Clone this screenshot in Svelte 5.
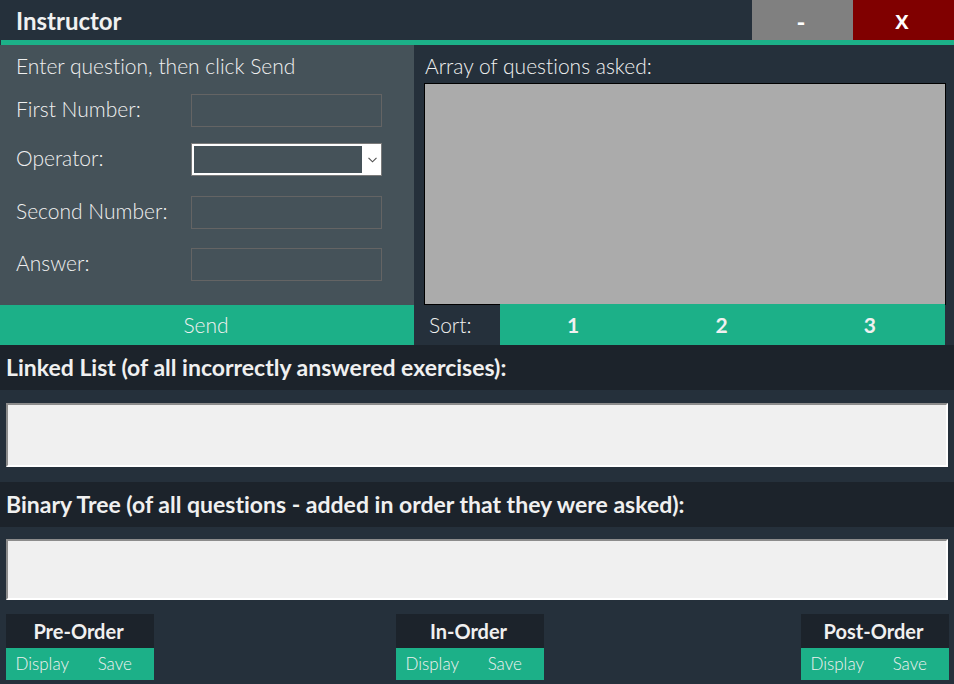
<script>
  let first = $state('');
  let operator = $state('');
  let second = $state('');
  let answer = $state('');
  const orders = ['Pre-Order', 'In-Order', 'Post-Order'];
</script>

<div class="window">
  <header class="titlebar">
    <h1>Instructor</h1>
    <button class="minimise" type="button" aria-label="Minimise">-</button>
    <button class="close" type="button" aria-label="Close">X</button>
  </header>
  <div class="accent"></div>

  <main>
    <div class="top">
      <form class="question" onsubmit={(e) => e.preventDefault()}>
        <p class="intro">Enter question, then click Send</p>
        <div class="fields">
          <label for="first">First Number:</label>
          <input id="first" type="text" bind:value={first} />
          <label for="operator">Operator:</label>
          <div class="combo">
            <select id="operator" bind:value={operator}>
              <option value=""></option>
              <option value="+">+</option>
              <option value="-">-</option>
              <option value="*">*</option>
              <option value="/">/</option>
            </select>
            <svg width="9" height="6" viewBox="0 0 9 6" aria-hidden="true">
              <path d="M0.5 0.8 L4.5 4.8 L8.5 0.8" fill="none" stroke="#505050" stroke-width="1.1" />
            </svg>
          </div>
          <label for="second">Second Number:</label>
          <input id="second" type="text" bind:value={second} />
          <label for="answer">Answer:</label>
          <input id="answer" type="text" bind:value={answer} readonly />
        </div>
        <button class="send" type="submit">Send</button>
      </form>

      <section class="asked">
        <p class="asked-label">Array of questions asked:</p>
        <div class="data" role="region" aria-label="Questions asked"></div>
        <div class="sort">
          <span>Sort:</span>
          {#each [1, 2, 3] as n}
            <button type="button">{n}</button>
          {/each}
        </div>
      </section>
    </div>

    <h2><label for="linked">Linked List (of all incorrectly answered exercises):</label></h2>
    <div class="output"><textarea id="linked" class="tall" readonly></textarea></div>

    <h2><label for="tree">Binary Tree (of all questions - added in order that they were asked):</label></h2>
    <div class="output second"><textarea id="tree" readonly></textarea></div>

    <div class="orders">
      {#each orders as name}
        <section class="order">
          <h3>{name}</h3>
          <div class="actions">
            <button type="button">Display</button>
            <button type="button">Save</button>
          </div>
        </section>
      {/each}
    </div>
  </main>
</div>

<style>
  :global(body) {
    background: #25303b;
  }
  .window {
    min-height: 100vh;
    background: #25303b;
    color: #f0f0f0;
    font: 300 21px/24px 'Century Gothic', Lato, sans-serif;
    font-variant-ligatures: none;
  }
  .window * {
    box-sizing: border-box;
  }
  h1, h2, h3, p {
    margin: 0;
    font-size: inherit;
  }
  button {
    border: 0;
    padding: 0;
    background: #1cb088;
    color: #f0f0f0;
    font: inherit;
    cursor: pointer;
  }
  .titlebar {
    display: flex;
    height: 40px;
  }
  h1 {
    flex: 1;
    padding: 9px 16px 0;
    font-size: 24px;
    line-height: 24px;
    font-weight: 700;
  }
  .titlebar button {
    width: 101px;
    padding: 4px 3px 0 0;
    color: #fff;
    font-size: 20px;
    font-weight: 700;
  }
  .titlebar .minimise {
    background: #808080;
    font-size: 24px;
  }
  .titlebar .close {
    background: #800000;
    font-family: 'Open Sans', sans-serif;
  }
  .accent {
    height: 5px;
    margin-left: 1px;
    background: #1cb088;
  }
  .top {
    display: grid;
    grid-template-columns: 414fr 540fr;
  }
  .question {
    display: flex;
    flex-direction: column;
    background: #455259;
  }
  .intro {
    padding: 9px 16px 16px;
  }
  .fields {
    display: grid;
    grid-template-columns: 175px 1fr;
    grid-template-rows: 49px 53px 52px 33px;
    align-items: start;
    padding: 0 32px 24px 16px;
  }
  .fields label {
    padding-top: 3px;
  }
  input, .combo {
    width: 100%;
    height: 33px;
  }
  input {
    padding: 0 6px;
    border: 1px solid #646464;
    border-radius: 0;
    background: #455259;
    color: #f0f0f0;
    font: inherit;
  }
  .combo {
    display: flex;
    align-items: center;
    justify-content: flex-end;
    position: relative;
    padding: 1px;
    background: #fff;
    border: 1px solid #7a7a7a;
  }
  select {
    width: 100%;
    height: 100%;
    appearance: none;
    border: 1px solid #fff;
    border-right-width: 18px;
    border-radius: 0;
    background: #455259;
    color: #f0f0f0;
    font: inherit;
  }
  .combo svg {
    position: absolute;
    right: 4px;
    pointer-events: none;
  }
  .send {
    height: 40px;
    margin-top: auto;
    padding: 0 2px 1px 0;
  }
  .asked {
    display: flex;
    flex-direction: column;
    padding: 9px 9px 0 10px;
  }
  .asked-label {
    padding: 0 1px 5px;
  }
  .data {
    height: 222px;
    margin-right: -1px;
    background: #ababab;
    border: 1px solid #000;
  }
  .sort {
    display: grid;
    grid-template-columns: 76px 1fr 1fr 1fr;
    align-items: center;
    margin-top: -1px;
  }
  .sort span {
    padding-left: 5px;
  }
  .sort button {
    height: 41px;
    padding-right: 2px;
    font-weight: 700;
  }
  h2 {
    padding: 10px 6px 11px;
    background: #1c232b;
    font-weight: 700;
    font-size: 23px;
    line-height: 24px;
  }
  .output {
    display: flex;
    padding: 13px 6px 15px;
  }
  .output.second {
    padding: 12px 6px 14px;
  }
  textarea {
    width: 100%;
    height: 61px;
    resize: none;
    border: 2px solid;
    border-color: #8c8c8c #fff #fff #8c8c8c;
    border-radius: 0;
    background: #f0f0f0;
    color: #252f3b;
    font: inherit;
  }
  textarea.tall {
    height: 64px;
  }
  .orders {
    display: grid;
    grid-template-columns: 390fr 405fr 148px;
    padding: 0 5px 4px 6px;
  }
  .order {
    width: 148px;
  }
  h3 {
    padding: 5px 3px 5px 0;
    background: #1c232b;
    font-size: 20px;
    font-weight: 700;
    text-align: center;
  }
  .actions {
    display: grid;
    grid-template-columns: 1fr 1fr;
    padding-right: 3px;
    background: #1cb088;
  }
  .actions button {
    height: 32px;
    font-size: 17px;
  }
</style>
